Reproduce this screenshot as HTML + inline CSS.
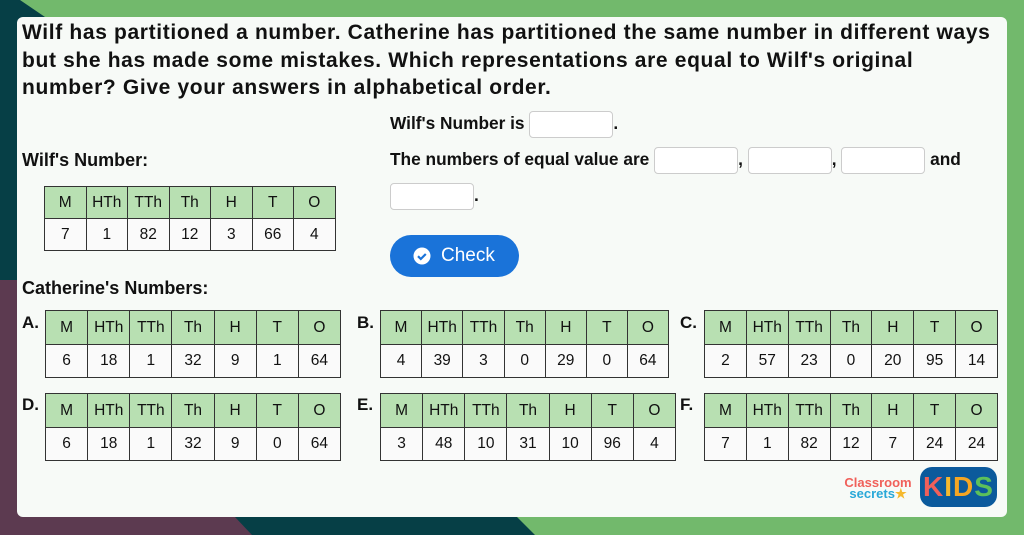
<!DOCTYPE html>
<html><head><meta charset="utf-8"><style>
*{margin:0;padding:0;box-sizing:border-box}
body{width:1024px;height:535px;position:relative;overflow:hidden;background:#72b96c;font-family:"Liberation Sans",sans-serif}
.card{position:absolute;left:17px;top:17px;width:990px;height:500px;background:#f7faf7;border-radius:6px}
.q{position:absolute;left:22px;top:19px;width:1000px;font-weight:bold;font-size:21px;letter-spacing:0.65px;line-height:27.5px;color:#111;white-space:nowrap}
.lbl{position:absolute;font-weight:bold;font-size:18px;color:#111}
.t{position:absolute;font-weight:bold;font-size:17.3px;color:#111;white-space:nowrap}
.in{display:inline-block;width:84px;height:27px;border:1px solid #ccc;border-radius:4px;background:#fff;vertical-align:middle}
table{position:absolute;border-collapse:collapse;font-size:15.5px;color:#111;text-align:center;background:#fafafa}
td{border:1.5px solid #333;width:41.5px}
tr.h td{background:#b8e0b2}
.let{position:absolute;font-weight:bold;font-size:17px;color:#111}
.btn{position:absolute;left:390px;top:235px;width:129px;height:42px;border-radius:21px;background:#1a73d9;color:#fff;font-size:19px;line-height:42px}
</style></head><body>
<svg style="position:absolute;left:0;top:0" width="1024" height="535">
<polygon points="0,0 20,0 45,17 45,517 517,517 535,535 0,535" fill="#063f46"/>
<polygon points="0,280 45,280 45,517 235,517 252,535 0,535" fill="#5c3a50"/>
</svg>
<div class="card"></div>
<div class="q">Wilf has partitioned a number. Catherine has partitioned the same number in different ways<br>but she has made some mistakes. Which representations are equal to Wilf's original<br>number? Give your answers in alphabetical order.</div>
<div class="lbl" style="left:22px;top:150px">Wilf's Number:</div>
<div class="lbl" style="left:22px;top:278px">Catherine's Numbers:</div>
<div class="t" style="left:390px;top:111px">Wilf's Number is <span class="in"></span>.</div>
<div class="t" style="left:390px;top:147px">The numbers of equal value are <span class="in"></span>, <span class="in"></span>, <span class="in"></span> and</div>
<div class="t" style="left:390px;top:183px"><span class="in"></span>.</div>
<div class="btn"><svg style="position:absolute;left:23px;top:12px" width="18" height="18"><circle cx="9" cy="9" r="8.5" fill="#fff"/><path d="M5 9.2l2.8 2.8 5-5" stroke="#1a73d9" stroke-width="2.2" fill="none"/></svg><span style="position:absolute;left:51px">Check</span></div>

<table style="left:44px;top:186px"><tr class="h" style="height:32px"><td>M</td><td>HTh</td><td>TTh</td><td>Th</td><td>H</td><td>T</td><td>O</td></tr><tr style="height:32px"><td>7</td><td>1</td><td>82</td><td>12</td><td>3</td><td>66</td><td>4</td></tr></table>

<div class="let" style="left:22px;top:313px">A.</div>
<table style="left:45px;top:310px;width:296px"><tr class="h" style="height:34px"><td>M</td><td>HTh</td><td>TTh</td><td>Th</td><td>H</td><td>T</td><td>O</td></tr><tr style="height:33px"><td>6</td><td>18</td><td>1</td><td>32</td><td>9</td><td>1</td><td>64</td></tr></table>
<div class="let" style="left:357px;top:313px">B.</div>
<table style="left:380px;top:310px;width:289px"><tr class="h" style="height:34px"><td>M</td><td>HTh</td><td>TTh</td><td>Th</td><td>H</td><td>T</td><td>O</td></tr><tr style="height:33px"><td>4</td><td>39</td><td>3</td><td>0</td><td>29</td><td>0</td><td>64</td></tr></table>
<div class="let" style="left:680px;top:313px">C.</div>
<table style="left:704px;top:310px;width:294px"><tr class="h" style="height:34px"><td>M</td><td>HTh</td><td>TTh</td><td>Th</td><td>H</td><td>T</td><td>O</td></tr><tr style="height:33px"><td>2</td><td>57</td><td>23</td><td>0</td><td>20</td><td>95</td><td>14</td></tr></table>
<div class="let" style="left:22px;top:395px">D.</div>
<table style="left:45px;top:393px;width:296px"><tr class="h" style="height:34px"><td>M</td><td>HTh</td><td>TTh</td><td>Th</td><td>H</td><td>T</td><td>O</td></tr><tr style="height:33px"><td>6</td><td>18</td><td>1</td><td>32</td><td>9</td><td>0</td><td>64</td></tr></table>
<div class="let" style="left:357px;top:395px">E.</div>
<table style="left:380px;top:393px;width:296px"><tr class="h" style="height:34px"><td>M</td><td>HTh</td><td>TTh</td><td>Th</td><td>H</td><td>T</td><td>O</td></tr><tr style="height:33px"><td>3</td><td>48</td><td>10</td><td>31</td><td>10</td><td>96</td><td>4</td></tr></table>
<div class="let" style="left:680px;top:395px">F.</div>
<table style="left:704px;top:393px;width:294px"><tr class="h" style="height:34px"><td>M</td><td>HTh</td><td>TTh</td><td>Th</td><td>H</td><td>T</td><td>O</td></tr><tr style="height:33px"><td>7</td><td>1</td><td>82</td><td>12</td><td>7</td><td>24</td><td>24</td></tr></table>

<div style="position:absolute;left:840px;top:477px;font-size:13px;font-weight:bold;line-height:11px;text-align:center;width:76px"><span style="color:#f0605a">Classroom</span><br><span style="color:#29a8d8">secrets</span><span style="color:#f5b92e">★</span></div>
<div style="position:absolute;left:920px;top:467px;width:77px;height:40px;background:#0b5a9c;border-radius:12px;font-weight:bold;font-size:28px;line-height:40px;text-align:center;letter-spacing:1px"><span style="color:#f0605a">K</span><span style="color:#f5b92e">I</span><span style="color:#f5a623">D</span><span style="color:#5cc05a">S</span></div>
</body></html>
